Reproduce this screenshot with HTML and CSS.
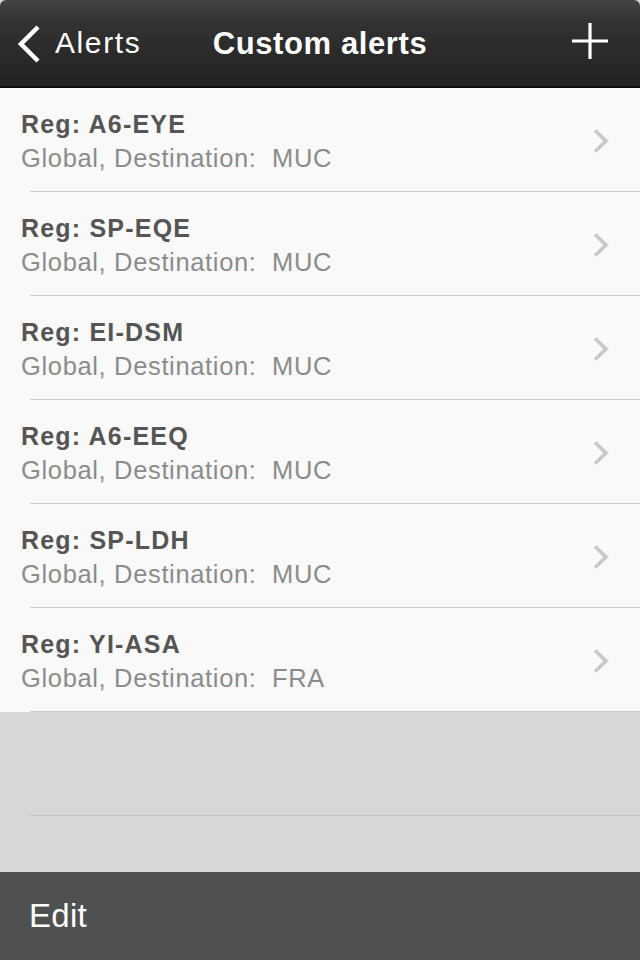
FILE: index.html
```html
<!DOCTYPE html>
<html lang="en">
<head>
<meta charset="utf-8">
<title>Custom alerts</title>
<link rel="stylesheet" href="styles.css">
</head>
<body>
<div class="screen">
  <header class="navbar">
    <div class="nav-left">
      <svg class="back-icon" width="26" height="40" viewBox="0 0 26 40"><path d="M22 3 L5 20 L22 37" fill="none" stroke="#fff" stroke-width="4.5" stroke-linejoin="miter"/></svg>
      <span class="back-label">Alerts</span>
    </div>
    <h1 class="nav-title">Custom alerts</h1>
    <div class="nav-right">
      <svg class="plus-icon" width="36" height="36" viewBox="0 0 36 36"><path d="M18 0 V36 M0 18 H36" stroke="#fff" stroke-width="3.2"/></svg>
    </div>
  </header>

  <ul class="list">
    <li class="row"><div class="row-text"><div class="row-title">Reg: A6-EYE</div><div class="row-sub">Global, Destination:&nbsp; MUC</div></div><svg class="chev" width="18" height="26" viewBox="0 0 18 26"><path d="M3 2.5 L14 13 L3 23.5" fill="none" stroke="#c7c7cc" stroke-width="3.6"/></svg></li>
    <li class="row"><div class="row-text"><div class="row-title">Reg: SP-EQE</div><div class="row-sub">Global, Destination:&nbsp; MUC</div></div><svg class="chev" width="18" height="26" viewBox="0 0 18 26"><path d="M3 2.5 L14 13 L3 23.5" fill="none" stroke="#c7c7cc" stroke-width="3.6"/></svg></li>
    <li class="row"><div class="row-text"><div class="row-title">Reg: EI-DSM</div><div class="row-sub">Global, Destination:&nbsp; MUC</div></div><svg class="chev" width="18" height="26" viewBox="0 0 18 26"><path d="M3 2.5 L14 13 L3 23.5" fill="none" stroke="#c7c7cc" stroke-width="3.6"/></svg></li>
    <li class="row"><div class="row-text"><div class="row-title">Reg: A6-EEQ</div><div class="row-sub">Global, Destination:&nbsp; MUC</div></div><svg class="chev" width="18" height="26" viewBox="0 0 18 26"><path d="M3 2.5 L14 13 L3 23.5" fill="none" stroke="#c7c7cc" stroke-width="3.6"/></svg></li>
    <li class="row"><div class="row-text"><div class="row-title">Reg: SP-LDH</div><div class="row-sub">Global, Destination:&nbsp; MUC</div></div><svg class="chev" width="18" height="26" viewBox="0 0 18 26"><path d="M3 2.5 L14 13 L3 23.5" fill="none" stroke="#c7c7cc" stroke-width="3.6"/></svg></li>
    <li class="row"><div class="row-text"><div class="row-title">Reg: YI-ASA</div><div class="row-sub">Global, Destination:&nbsp; FRA</div></div><svg class="chev" width="18" height="26" viewBox="0 0 18 26"><path d="M3 2.5 L14 13 L3 23.5" fill="none" stroke="#c7c7cc" stroke-width="3.6"/></svg></li>
  </ul>

  <div class="empty">
    <div class="empty-row"></div>
  </div>

  <footer class="toolbar">
    <span class="edit">Edit</span>
  </footer>
</div>
</body>
</html>
```
FILE: styles.css
```css
* { box-sizing: border-box; }
html, body {
  margin: 0;
  padding: 0;
  background: #d7d7d7;
  font-family: "Liberation Sans", Arial, sans-serif;
}
.screen {
  width: 640px;
  height: 960px;
  display: flex;
  flex-direction: column;
  overflow: hidden;
}
.navbar {
  height: 88px;
  flex: 0 0 88px;
  display: grid;
  grid-template-columns: 1fr auto 1fr;
  align-items: center;
  padding: 0 16px;
  background: linear-gradient(#434343 0px, #333 20px, #222 86px);
  border-bottom: 2px solid #0c0c0c;
  border-radius: 6px 6px 0 0;
  color: #fff;
}
.nav-left {
  display: flex;
  align-items: center;
}
.back-icon {
  display: block;
  margin-top: 2px;
}
.back-label {
  margin-left: 13px;
  font-size: 30px;
  letter-spacing: 1.6px;
  margin-top: 0;
}
.nav-title {
  margin: 0;
  font-size: 31px;
  font-weight: bold;
  letter-spacing: 0.6px;
  margin-top: 1px;
}
.nav-right {
  display: flex;
  justify-content: flex-end;
  padding-right: 16px;
}
.plus-icon {
  display: block;
  margin-top: -5px;
}
.list {
  list-style: none;
  margin: 0;
  padding: 0;
  background: #f9f9f9;
}
.row {
  height: 104px;
  display: flex;
  align-items: center;
  padding: 0 30px 0 21px;
  position: relative;
}
.row::after {
  content: "";
  position: absolute;
  left: 30px;
  right: 0;
  bottom: 0;
  height: 1px;
  background: #c8c8c8;
}
.row-text {
  flex: 1;
  padding-top: 19px;
  padding-bottom: 17px;
  align-self: stretch;
}
.row-title {
  font-size: 25px;
  line-height: 34px;
  font-weight: bold;
  color: #555;
  letter-spacing: 1.2px;
}
.row-sub {
  font-size: 25.5px;
  line-height: 34px;
  color: #8c8c8c;
  letter-spacing: 0.65px;
}
.chev {
  display: block;
  margin-top: 1px;
}
.empty {
  flex: 1;
  background: #d7d7d7;
}
.empty-row {
  height: 104px;
  margin-left: 30px;
  border-bottom: 1px solid #c6c6c6;
}
.toolbar {
  height: 88px;
  flex: 0 0 88px;
  background: #4f5150;
  display: flex;
  align-items: center;
  padding-left: 29px;
}
.edit {
  color: #fff;
  font-size: 33px;
  letter-spacing: 0.3px;
}
```
